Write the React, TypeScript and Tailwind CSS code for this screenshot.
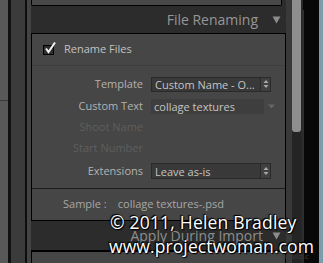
function Stepper() {
  return (
    <div className="w-[10px] h-full border-l border-[#2a2a2a] bg-[#404040] flex items-center justify-center">
      <svg width="6" height="10" viewBox="0 0 6 10">
        <path d="M3 1 L5.5 4 H0.5 Z" fill="#a8a8a8" />
        <path d="M3 9 L5.5 6 H0.5 Z" fill="#a8a8a8" />
      </svg>
    </div>
  )
}

function Row({ label, dim, h, children }: { label: string; dim?: boolean; h: string; children?: React.ReactNode }) {
  return (
    <div className={`flex items-center ${h}`}>
      <div className={`w-[111px] text-right text-[11px] ${dim ? 'text-[#5e5e5e]' : 'text-[#b2b2b2]'}`}>{label}</div>
      <div className="ml-[8px] flex items-center">{children}</div>
    </div>
  )
}

export default function App() {
  return (
    <div className="relative w-[323px] h-[263px] flex overflow-hidden bg-black font-['Open_Sans',sans-serif]">
      {/* left strips */}
      <div className="w-[8px] bg-[#585858] flex flex-col">
        <div className="h-[100px]" />
        <div className="h-px bg-[#3a3a3a]" />
      </div>
      <div className="w-[3px] bg-[#111]" />
      <div className="w-[14px] bg-[#3b3b3b]" />
      <div className="w-[2px] bg-[#0e0e0e]" />
      <div className="w-[4px] bg-[#434343]" />

      {/* main column */}
      <div className="w-[255px] flex flex-col bg-[#2c2c2c]">
        <div className="h-[6px] flex">
          <div className="flex-1 bg-[#484848] border-x border-b border-black rounded-b-[2px] mr-[4px]" />
        </div>
        <div className="h-[27px] flex items-center justify-end pr-[5px]">
          <span className="text-[14px] text-[#969696] leading-none">File Renaming</span>
          <svg width="9" height="8" viewBox="0 0 9 8" className="ml-[14px]">
            <path d="M0.5 0.5 H8.5 L4.5 7.5 Z" fill="#8c8c8c" />
          </svg>
        </div>

        {/* panel body */}
        <div className="border border-black bg-[#464646] flex flex-col">
          <div className="h-[32px] flex items-center pl-[11px] border-b border-[#3e3e3e]">
            <div className="relative w-[11px] h-[10px] border border-black bg-[#2e2e2e]">
              <svg width="14" height="14" viewBox="0 0 14 14" className="absolute left-[0px] top-[-5px]">
                <path d="M2 7.5 L4.5 11 L11 1.5" stroke="#f2f2f2" strokeWidth="2" fill="none" />
              </svg>
            </div>
            <span className="ml-[10px] text-[11px] text-[#c2c2c2]">Rename Files</span>
          </div>
          <div className="h-[7px]" />
          <Row label="Template" h="h-[22px]">
            <div className="w-[120px] h-[15px] bg-[#393939] border border-[#2a2a2a] flex items-center">
              <span className="flex-1 pl-[3px] text-[11px] text-[#c4c4c4] leading-none whitespace-nowrap">Custom Name - O...</span>
              <Stepper />
            </div>
          </Row>
          <Row label="Custom Text" h="h-[22px]">
            <div className="w-[113px] h-[15px] bg-[#3e3e3e] flex items-center">
              <span className="pl-[3px] text-[11px] text-[#c4c4c4] leading-none whitespace-nowrap">collage textures</span>
            </div>
            <svg width="7" height="5" viewBox="0 0 7 5" className="ml-[4px]">
              <path d="M0 0.5 H7 L3.5 4.5 Z" fill="#666" />
            </svg>
          </Row>
          <Row label="Shoot Name" dim h="h-[21px]" />
          <Row label="Start Number" dim h="h-[21px]" />
          <Row label="Extensions" h="h-[24px]">
            <div className="w-[120px] h-[16px] bg-[#393939] border border-[#2a2a2a] flex items-center">
              <span className="flex-1 pl-[3px] text-[11px] text-[#c4c4c4] leading-none">Leave as-is</span>
              <Stepper />
            </div>
          </Row>
          <div className="h-[6px] border-b border-[#1c1c1c]" />
          <div className="h-[31px] flex items-center pl-[31px] text-[11px] text-[#a6a6a6]">
            <span>Sample :</span>
            <span className="ml-[11px]">collage textures-.psd</span>
          </div>
        </div>

        <div className="h-[29px] flex items-center justify-end pr-[5px]">
          <span className="text-[14px] text-[#8e8e8e] leading-none">Apply During Import</span>
          <svg width="9" height="8" viewBox="0 0 9 8" className="ml-[9px]">
            <path d="M0.5 0.5 H8.5 L4.5 7.5 Z" fill="#8c8c8c" />
          </svg>
        </div>
        <div className="flex-1 border-t-2 border-black bg-[#464646] border-x" />
      </div>

      {/* right strips */}
      <div className="w-[6px] bg-[#393939]" />
      <div className="w-[9px] bg-[#242424] flex flex-col">
        <div className="h-[132px] bg-[#8e8e8e] rounded-b-[3px]" />
      </div>
      <div className="w-[2px] bg-[#2a2a2a]" />
      <div className="w-[16px] bg-[#080808] flex">
        <div className="w-px mt-[10px] bg-[#303030]" />
      </div>
      <div className="w-[4px] bg-[#7c9cab]" />

      {/* watermark */}
      <div className="absolute left-[110px] top-[210px] text-white font-['Open_Sans',sans-serif] leading-[24px] [text-shadow:0_0_2px_#000,1px_1px_1px_#000,-1px_-1px_1px_#000]">
        <div className="text-[17.5px] tracking-[0.2px] whitespace-nowrap">© 2011, Helen Bradley</div>
        <div className="text-[17.5px] tracking-[0.1px] whitespace-nowrap -ml-[1px]">www.projectwoman.com</div>
      </div>
      <div className="absolute left-[283px] top-[252px] text-[8px] text-[#3a3a3a] leading-none">wtvid.c</div>
    </div>
  )
}
